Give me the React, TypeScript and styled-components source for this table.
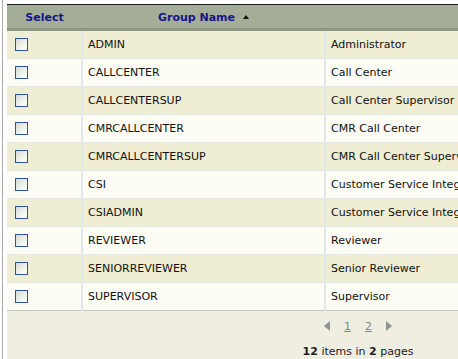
import React from "react";
import styled, { createGlobalStyle } from "styled-components";

const GlobalStyle = createGlobalStyle`
  html, body {
    margin: 0;
    padding: 0;
    overflow: hidden;
    background: #ffffff;
    font-family: "DejaVu Sans", Verdana, sans-serif;
  }
`;

const groups = [
  { name: "ADMIN", desc: "Administrator" },
  { name: "CALLCENTER", desc: "Call Center" },
  { name: "CALLCENTERSUP", desc: "Call Center Supervisor" },
  { name: "CMRCALLCENTER", desc: "CMR Call Center" },
  { name: "CMRCALLCENTERSUP", desc: "CMR Call Center Supervisor" },
  { name: "CSI", desc: "Customer Service Integration" },
  { name: "CSIADMIN", desc: "Customer Service Integration Admin" },
  { name: "REVIEWER", desc: "Reviewer" },
  { name: "SENIORREVIEWER", desc: "Senior Reviewer" },
  { name: "SUPERVISOR", desc: "Supervisor" },
];

const Frame = styled.div`
  margin-left: 2px;
  border-left: 1px solid #a9aaa9;
  padding: 4px 0 0 4px;
  background: #ffffff;
`;

const Grid = styled.table`
  width: 702px;
  border-collapse: collapse;
  table-layout: fixed;
  border-top: 1px solid #1b1b1b;
  font-size: 11px;
`;

const HeadCell = styled.th<{ $w?: number }>`
  width: ${(p) => (p.$w ? `${p.$w}px` : "auto")};
  height: 22px;
  padding: 1px 0 0;
  background: #a4ad98;
  border-bottom: 3px solid #8f9785;
  color: #16168c;
  font-weight: bold;
  text-align: center;
  vertical-align: middle;
  white-space: nowrap;
`;

const SortArrow = styled.span`
  display: inline-block;
  width: 0;
  height: 0;
  margin-left: 8px;
  vertical-align: 2px;
  border-left: 3px solid transparent;
  border-right: 3px solid transparent;
  border-bottom: 4px solid #111111;
`;

const Row = styled.tr<{ $odd: boolean }>`
  background: ${(p) => (p.$odd ? "#efedd3" : "#fdfdf5")};
`;

const Cell = styled.td`
  height: 27px;
  padding: 0 0 0 5px;
  border-top: 1px solid #e3e9e8;
  border-left: 2px solid #dfe8eb;
  color: #111111;
  white-space: nowrap;
  overflow: hidden;
  vertical-align: middle;
  &:first-child {
    border-left: none;
    padding-left: 8px;
  }
`;

const Check = styled.span`
  display: block;
  width: 11px;
  height: 11px;
  border: 1px solid #2b5797;
  background: linear-gradient(135deg, #dadad4 0%, #f2f2ee 60%, #ffffff 100%);
`;

const FooterCell = styled.td`
  height: 54px;
  padding: 6px 0 0;
  background: #efeee0;
  border-top: 1px solid #c2c6c4;
  text-align: center;
  vertical-align: top;
  color: #222222;
`;

const Pager = styled.div`
  display: flex;
  justify-content: center;
  align-items: center;
  gap: 14px;
  height: 18px;
`;

const PageLink = styled.a`
  color: #7c8a92;
  text-decoration: underline;
  font-size: 11px;
`;

const Info = styled.div`
  margin-top: 10px;
  font-size: 11px;
  color: #222222;
  b {
    font-weight: bold;
  }
`;

function Tri({ dir }: { dir: "left" | "right" }) {
  return (
    <svg width="6" height="10" viewBox="0 0 6 10">
      {dir === "left" ? (
        <polygon points="6,0 6,10 0,5" fill="#8c9596" />
      ) : (
        <polygon points="0,0 0,10 6,5" fill="#8c9596" />
      )}
    </svg>
  );
}

export default function App() {
  return (
    <>
      <GlobalStyle />
      <Frame>
        <Grid>
          <thead>
            <tr>
              <HeadCell $w={75}>Select</HeadCell>
              <HeadCell $w={243}>
                Group Name
                <SortArrow />
              </HeadCell>
              <HeadCell>Description</HeadCell>
            </tr>
          </thead>
          <tbody>
            {groups.map((g, i) => (
              <Row key={g.name} $odd={i % 2 === 0}>
                <Cell>
                  <Check />
                </Cell>
                <Cell>{g.name}</Cell>
                <Cell>{g.desc}</Cell>
              </Row>
            ))}
            <tr>
              <FooterCell colSpan={3}>
                <Pager>
                  <Tri dir="left" />
                  <PageLink>1</PageLink>
                  <PageLink>2</PageLink>
                  <Tri dir="right" />
                </Pager>
                <Info>
                  <b>12</b> items in <b>2</b> pages
                </Info>
              </FooterCell>
            </tr>
          </tbody>
        </Grid>
      </Frame>
    </>
  );
}
